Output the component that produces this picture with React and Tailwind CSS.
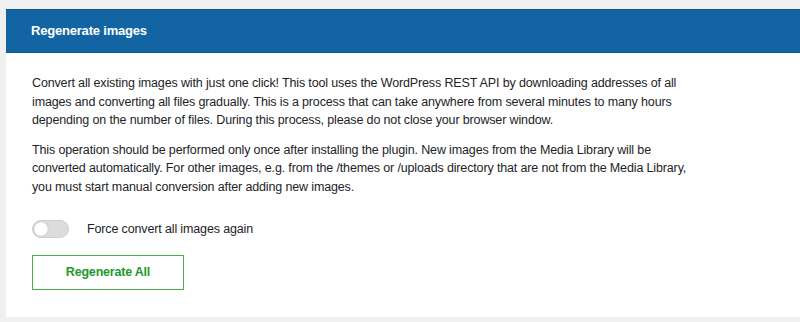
export default function App() {
  const font = { fontFamily: '"Liberation Sans", Arial, sans-serif' };
  return (
    <div className="w-[800px] h-[322px] bg-[#f0f0f1] pt-[9px] pl-[6px]" style={font}>
      <div className="bg-white h-[308px] flex flex-col">
        <div className="h-[44px] bg-[#1264a3] border-t border-b border-[#0c5594] flex items-center pl-[25px]">
          <h2 className="text-white text-[13px] font-bold tracking-[-0.2px]">Regenerate images</h2>
        </div>
        <div className="pl-[26px] pt-[21px] text-[12.5px] leading-[18.5px] text-[#1d2327] tracking-[-0.14px]">
          <p className="whitespace-nowrap">
            Convert all existing images with just one click! This tool uses the WordPress REST API by downloading addresses of all
            <br />
            images and converting all files gradually. This is a process that can take anywhere from several minutes to many hours
            <br />
            depending on the number of files. During this process, please do not close your browser window.
          </p>
          <p className="mt-[11px] whitespace-nowrap">
            This operation should be performed only once after installing the plugin. New images from the Media Library will be
            <br />
            converted automatically. For other images, e.g. from the /themes or /uploads directory that are not from the Media Library,
            <br />
            you must start manual conversion after adding new images.
          </p>
          <div className="mt-[24px] flex items-center gap-[18px]">
            <button
              type="button"
              className="relative w-[37px] h-[18px] rounded-full bg-[#dcdcdc] border border-[#cfcfcf]"
              aria-label="toggle"
            >
              <span className="absolute left-[1px] top-[1px] w-[14px] h-[14px] rounded-full bg-white shadow-[0_0_1px_rgba(0,0,0,0.4)]" />
            </button>
            <span className="text-[#1d2327]">Force convert all images again</span>
          </div>
          <button
            type="button"
            className="mt-[16px] w-[152px] h-[35px] border border-[#4cb050] bg-white text-[#1a9a2b] text-[12.5px] font-bold tracking-[-0.2px] flex items-center justify-center"
          >
            Regenerate All
          </button>
        </div>
      </div>
    </div>
  );
}
